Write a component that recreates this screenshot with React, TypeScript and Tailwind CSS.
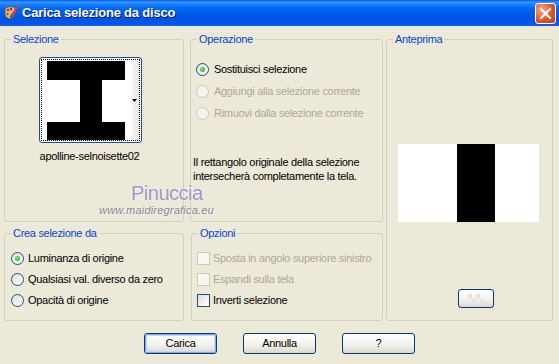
import React from "react";

const FONT = "font-['Liberation_Sans',Arial,sans-serif]";

function Radio({ checked = false, disabled = false }: { checked?: boolean; disabled?: boolean }) {
  return (
    <span
      className={`inline-flex h-[13px] w-[13px] shrink-0 items-center justify-center rounded-full border ${
        disabled
          ? "border-[#CAC8BB] bg-[#F4F3EE]"
          : "border-[#1C5180] bg-[linear-gradient(135deg,#DCDCD7,#FFFFFF)]"
      }`}
    >
      {checked && (
        <span className="h-[5px] w-[5px] rounded-full bg-[radial-gradient(circle_at_40%_40%,#7BE57B,#21A121)]" />
      )}
    </span>
  );
}

function Check({ disabled = false }: { disabled?: boolean }) {
  return (
    <span
      className={`inline-block h-[13px] w-[13px] shrink-0 border ${
        disabled
          ? "border-[#CAC8BB] bg-[#F7F6F2]"
          : "border-[#1C5180] bg-[linear-gradient(135deg,#DCDCD7,#FFFFFF)]"
      }`}
    />
  );
}

function Group({
  label,
  className,
  children,
}: {
  label: string;
  className: string;
  children?: React.ReactNode;
}) {
  return (
    <fieldset className={`rounded-[3px] border border-[#D0D0BF] ${className}`}>
      <legend className="ml-[6px] px-[2px] text-[11px] leading-[13px] tracking-[-0.3px] text-[#0046D5]">
        {label}
      </legend>
      {children}
    </fieldset>
  );
}

function Btn({ children, def = false }: { children: React.ReactNode; def?: boolean }) {
  return (
    <div className="h-[21px] w-[73px] rounded-[3px] border border-[#003C74] bg-[linear-gradient(to_bottom,#FFFFFF,#F0F0EA_60%,#DCD8CC)]">
      <div
        className={`flex h-full w-full items-center justify-center rounded-[2px] text-[11px] tracking-[-0.3px] text-black ${
          def ? "border border-[#8DA8E6] shadow-[inset_0_0_0_1px_#C4D6F8]" : ""
        }`}
      >
        {children}
      </div>
    </div>
  );
}

function TitleIcon() {
  return (
    <svg width="16" height="16" viewBox="0 0 16 16">
      <path d="M2 5 C2 2 7 1 10 2 C13 3 14 6 12 8 C10 10 11 12 9 13 C6 15 2 12 2 9 Z" fill="#E8B07A" stroke="#8A4A20" strokeWidth="0.8" />
      <circle cx="5" cy="5" r="1.3" fill="#E02020" />
      <circle cx="8" cy="4" r="1.2" fill="#2050E0" />
      <circle cx="4.5" cy="9" r="1.2" fill="#20A020" />
      <circle cx="7" cy="11.5" r="1.1" fill="#F0E020" />
      <path d="M15 1 L9 10" stroke="#C04040" strokeWidth="2" />
      <path d="M9 10 L7.5 12.5" stroke="#404040" strokeWidth="2" />
    </svg>
  );
}

export default function App() {
  return (
    <div className={`relative h-[364px] w-[559px] overflow-hidden bg-[#ECE9D8] ${FONT}`}>
      {/* Title bar */}
      <div className="flex h-[26px] items-center bg-[linear-gradient(to_bottom,#0058EE_0%,#3A93FF_8%,#288EFF_12%,#127DFF_20%,#036FFC_28%,#0262EE_40%,#0057E5_60%,#0054E3_80%,#0055EB_90%,#005BF5_95%,#026AFE_97%,#0062EF_98%,#0052D6_100%)] pl-[3px] pr-[3px]">
        <TitleIcon />
        <span className="ml-[3px] text-[13px] font-bold tracking-[-0.2px] text-white [text-shadow:1px_1px_#0A1883]">
          Carica selezione da disco
        </span>
        <div className="ml-auto flex h-[21px] w-[21px] items-center justify-center rounded-[3px] border border-white bg-[radial-gradient(circle_at_30%_30%,#F4A584,#E0562A_55%,#C23B12)]">
          <svg width="13" height="13" viewBox="0 0 13 13">
            <path d="M2 2 L11 11 M11 2 L2 11" stroke="white" strokeWidth="2.2" strokeLinecap="square" />
          </svg>
        </div>
      </div>

      {/* Body */}
      <div className="flex gap-[3px] pl-[4px] pt-[7px] text-[11px] tracking-[-0.3px] text-black">
        <div className="flex flex-col gap-[5px]">
          <div className="flex gap-[6px]">
            <Group label="Selezione" className="h-[189px] w-[180px]">
              <div className="flex flex-col items-start pl-[34px] pt-[11px]">
                <div className="h-[86px] w-[103px] rounded-[3px] border border-[#1F4E8C] bg-white p-[1px]">
                  <div className="flex h-full w-full border border-dotted border-black">
                    <svg width="88" height="80" viewBox="0 0 88 80" className="shrink-0">
                      <rect x="0" y="0" width="88" height="80" fill="white" />
                      <rect x="5" y="1" width="78" height="19" fill="black" />
                      <rect x="38" y="19" width="22" height="44" fill="black" />
                      <rect x="5" y="62" width="78" height="18" fill="black" />
                    </svg>
                    <div className="flex flex-1 items-center justify-end bg-[linear-gradient(to_right,#FFFFFF,#E6E4DA)] pr-[2px]">
                      <svg width="5" height="3" viewBox="0 0 5 3">
                        <path d="M0 0 L5 0 L2.5 3 Z" fill="black" />
                      </svg>
                    </div>
                  </div>
                </div>
                <div className="mt-[7px] w-[103px] pr-[2px] text-center leading-[13px]">apolline-selnoisette02</div>
              </div>
            </Group>
            <Group label="Operazione" className="h-[189px] w-[193px]">
              <div className="flex flex-col pl-[5px] pt-[12px]">
                <div className="flex h-[22px] items-center gap-[5px]">
                  <Radio checked />
                  <span>Sostituisci selezione</span>
                </div>
                <div className="flex h-[22px] items-center gap-[5px] text-[#ACA899]">
                  <Radio disabled />
                  <span>Aggiungi alla selezione corrente</span>
                </div>
                <div className="flex h-[22px] items-center gap-[5px] text-[#ACA899]">
                  <Radio disabled />
                  <span>Rimuovi dalla selezione corrente</span>
                </div>
              </div>
              <div className="mt-[31px] pl-[2px] leading-[14px]">
                Il rettangolo originale della selezione
                <br />
                intersecherà completamente la tela.
              </div>
            </Group>
          </div>
          <div className="flex gap-[7px]">
            <Group label="Crea selezione da" className="h-[94px] w-[180px]">
              <div className="flex flex-col pl-[6px] pt-[8px]">
                <div className="flex h-[21px] items-center gap-[4px]">
                  <Radio checked />
                  <span>Luminanza di origine</span>
                </div>
                <div className="flex h-[21px] items-center gap-[4px]">
                  <Radio />
                  <span>Qualsiasi val. diverso da zero</span>
                </div>
                <div className="flex h-[21px] items-center gap-[4px]">
                  <Radio />
                  <span>Opacità di origine</span>
                </div>
              </div>
            </Group>
            <Group label="Opzioni" className="h-[94px] w-[192px]">
              <div className="flex flex-col pl-[5px] pt-[8px]">
                <div className="flex h-[21px] items-center gap-[3px] text-[#ACA899]">
                  <Check disabled />
                  <span>Sposta in angolo superiore sinistro</span>
                </div>
                <div className="flex h-[21px] items-center gap-[3px] text-[#ACA899]">
                  <Check disabled />
                  <span>Espandi sulla tela</span>
                </div>
                <div className="flex h-[21px] items-center gap-[3px]">
                  <Check />
                  <span>Inverti selezione</span>
                </div>
              </div>
            </Group>
          </div>
        </div>
        <Group label="Anteprima" className="h-[288px] w-[167px]">
          <div className="flex flex-col items-start pl-[11px] pt-[98px]">
            <svg width="141" height="78" viewBox="0 0 141 78">
              <rect x="0" y="0" width="141" height="78" fill="white" />
              <rect x="59" y="0" width="38" height="78" fill="black" />
            </svg>
            <div className="ml-[60px] mt-[67px] flex h-[19px] w-[36px] items-center justify-center rounded-[3px] border border-[#003C74] bg-[linear-gradient(to_bottom,#FFFFFF,#F0F0EA_60%,#DCD8CC)]">
              <svg width="16" height="10" viewBox="0 0 16 10">
                <rect x="0" y="0" width="4" height="5" fill="#E4E4E4" />
                <rect x="8" y="0" width="4" height="5" fill="#E4E4E4" />
                <rect x="4" y="5" width="4" height="5" fill="#E4E4E4" />
                <rect x="12" y="5" width="4" height="5" fill="#E4E4E4" />
              </svg>
            </div>
          </div>
        </Group>
      </div>

      {/* Buttons */}
      <div className="mt-[12px] flex justify-center gap-[26px]">
        <Btn def>Carica</Btn>
        <Btn>Annulla</Btn>
        <Btn>?</Btn>
      </div>

      {/* Watermark */}
      <div className="pointer-events-none absolute left-[131px] top-[182px] text-[20px] leading-[22px] tracking-[-0.5px] text-[#9C9AC4] [text-shadow:0_0_2px_#FFFFFF]">
        Pinuccia
      </div>
      <div className="pointer-events-none absolute left-[99px] top-[204px] text-[11px] italic leading-[13px] tracking-[0.2px] text-[#85859A] [text-shadow:0_0_2px_#FFFFFF]">
        www.maidiregrafica.eu
      </div>
    </div>
  );
}
